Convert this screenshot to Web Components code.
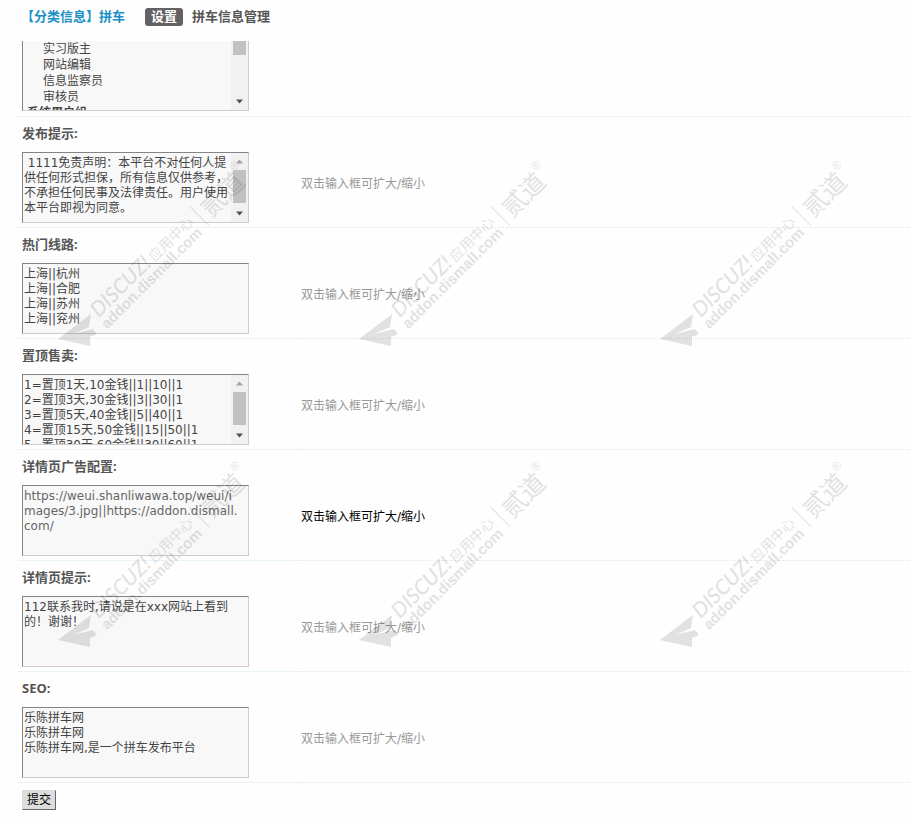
<!DOCTYPE html>
<html lang="zh-CN">
<head>
<meta charset="utf-8">
<title>拼车 - 设置</title>
<style>
  body {
    margin: 0;
    background: #fefefe;
    color: #444;
    font: 12px/16px "DejaVu Sans", "Noto Sans CJK SC", sans-serif;
  }
</style>
</head>
<body>
<admin-page>
  <admin-header slot="header" heading="【分类信息】拼车">
    <a href="#settings" aria-current="page">设置</a>
    <a href="#manage">拼车信息管理</a>
  </admin-header>

  <group-picker></group-picker>

  <setting-row label="发布提示:" scroll>&nbsp;1111免责声明：本平台不对任何人提供任何形式担保，所有信息仅供参考，不承担任何民事及法律责任。用户使用本平台即视为同意。</setting-row>
  <setting-row label="热门线路:">上海||杭州
上海||合肥
上海||苏州
上海||兖州</setting-row>
  <setting-row label="置顶售卖:" scroll>1=置顶1天,10金钱||1||10||1
2=置顶3天,30金钱||3||30||1
3=置顶5天,40金钱||5||40||1
4=置顶15天,50金钱||15||50||1
5=置顶30天,60金钱||30||60||1</setting-row>
  <setting-row label="详情页广告配置:" active>https://weui.shanliwawa.top/weui/images/3.jpg||https://addon.dismall.com/</setting-row>
  <setting-row label="详情页提示:">112联系我时,请说是在xxx网站上看到的！谢谢！</setting-row>
  <setting-row label="SEO:">乐陈拼车网
乐陈拼车网
乐陈拼车网,是一个拼车发布平台</setting-row>

  <submit-bar slot="footer">提交</submit-bar>

  <water-mark slot="marks"></water-mark>
  <water-mark slot="marks"></water-mark>
  <water-mark slot="marks"></water-mark>
  <water-mark slot="marks"></water-mark>
  <water-mark slot="marks"></water-mark>
  <water-mark slot="marks"></water-mark>
</admin-page>

<script>
class AdminPage extends HTMLElement {
  constructor() {
    super();
    this.attachShadow({mode: 'open'});
    this.shadowRoot.innerHTML = `
      <style>
        :host {
          display: block;
          position: relative;
          overflow: hidden;
        }

        main {
          margin-left: 18px;
        }

        /* marks float over the form */
        .marks {
          position: absolute;
          top: 160px;
          left: 58px;
          display: grid;
          grid-template-columns: repeat(3, 301px);
          grid-auto-rows: 301px;
          pointer-events: none;
        }
      </style>
      <slot name="header"></slot>
      <main>
        <slot></slot>
        <slot name="footer"></slot>
      </main>
      <div class="marks" aria-hidden="true"><slot name="marks"></slot></div>
    `;
  }
}

class AdminHeader extends HTMLElement {
  constructor() {
    super();
    this.attachShadow({mode: 'open'});
  }

  connectedCallback() {
    this.shadowRoot.innerHTML = `
      <style>
        :host {
          display: block;
          padding: 8px 21px 15px;
          font-size: 13px;
          font-weight: bold;
          line-height: 18px;
        }

        header, nav {
          display: flex;
          align-items: center;
        }

        header {
          gap: 20px;
        }

        nav {
          gap: 9px;
        }

        h1 {
          margin: 0;
          color: #1b8fc6;
          font-size: inherit;
        }

        ::slotted(a) {
          color: #555;
          text-decoration: none;
        }

        ::slotted(a[aria-current]) {
          padding: 0 6px;
          border-radius: 3px;
          background: #636163;
          color: #fff;
        }
      </style>
      <header>
        <h1>${this.getAttribute('heading')}</h1>
        <nav><slot></slot></nav>
      </header>
    `;
  }
}

class ScrollRail extends HTMLElement {
  constructor() {
    super();
    this.attachShadow({mode: 'open'});
    this.shadowRoot.innerHTML = `
      <style>
        :host {
          display: flex;
          flex-direction: column;
          align-items: center;
          flex: none;
          width: 17px;
          background: #f1f1f1;
        }

        svg {
          flex: none;
          width: 17px;
          height: 17px;
          fill: #505050;
        }

        .up {
          fill: #a3a3a3;
        }

        .thumb {
          width: 13px;
          height: 33px;
          background: #c1c1c1;
        }

        .down {
          margin-top: auto;
        }

        :host([scrolled]) .up {
          display: none;
        }

        :host([scrolled]) .thumb {
          height: 14px;
        }
      </style>
      <svg class="up" viewBox="0 0 17 17"><path d="M5 10.5h7L8.500 6.500z"/></svg>
      <div class="thumb"></div>
      <svg class="down" viewBox="0 0 17 17"><path d="M5 6.500h7L8.500 10.500z"/></svg>
    `;
  }
}

const fieldStyles = `
  :host {
    display: grid;
    grid-template-columns: 279px 1fr;
  }

  .cell, .hint {
    border-bottom: 1px solid #e9f3fa;
  }

  .hint {
    display: flex;
    align-items: center;
    padding-left: 4px;
    border-bottom: 1px dotted #dce8ee;
    color: #999;
  }

  .frame {
    display: flex;
    box-sizing: border-box;
    width: 227px;
    border: 1px solid;
    border-color: #848484 #ccc #ccc #848484;
    background: #f8f8f8;
  }

  textarea, select {
    flex: 1;
    min-width: 0;
    margin: 0;
    border: 0;
    outline: 0;
    background: none;
    color: inherit;
    font: inherit;
    overflow: hidden;
  }
`;

class GroupPicker extends HTMLElement {
  constructor() {
    super();
    this.attachShadow({mode: 'open'});
    this.shadowRoot.innerHTML = `
      <style>
        ${fieldStyles}

        .cell {
          padding: 0 4px 5px;
        }

        .frame {
          height: 70px;
          border-top: 0;
        }

        select {
          padding: 0;
          border-radius: 0;
        }

        option {
          box-sizing: border-box;
          height: 16px;
          min-height: 0;
          padding: 0 0 0 20px;
          line-height: 16px;
          overflow: hidden;
        }

        optgroup {
          padding-left: 2px;
          font-weight: bold;
        }
      </style>
      <div class="cell">
        <div class="frame">
          <select multiple aria-label="用户组">
            <option>实习版主</option>
            <option>网站编辑</option>
            <option>信息监察员</option>
            <option>审核员</option>
            <optgroup label="系统用户组"></optgroup>
          </select>
          <scroll-rail scrolled></scroll-rail>
        </div>
      </div>
      <div class="hint"></div>
    `;
  }

  connectedCallback() {
    this.shadowRoot.querySelector('select').scrollTop = 2;
  }
}

class SettingRow extends HTMLElement {
  constructor() {
    super();
    this.attachShadow({mode: 'open'});
  }

  connectedCallback() {
    const rail = this.hasAttribute('scroll') ? '<scroll-rail></scroll-rail>' : '';

    this.shadowRoot.innerHTML = `
      <style>
        ${fieldStyles}

        label {
          grid-column: 1 / -1;
          padding: 8px 4px 0;
          color: #555;
          font-family: "Noto Sans", "Noto Sans CJK SC", sans-serif;
          font-size: 13px;
          font-weight: bold;
        }

        .cell {
          padding: 11px 4px 4px;
        }

        .frame {
          height: 71px;
        }

        textarea {
          padding: 3px 1px 0;
          line-height: 15px;
          resize: none;
          word-break: normal;
          overflow-wrap: anywhere;
        }

        :host([active]) .hint {
          color: #000;
        }

        :host([active]) textarea {
          padding-right: 5px;
          color: #666;
          word-break: break-all;
        }
      </style>
      <label for="field">${this.getAttribute('label')}</label>
      <div class="cell">
        <div class="frame">
          <textarea id="field" spellcheck="false"></textarea>
          ${rail}
        </div>
      </div>
      <div class="hint">双击输入框可扩大/缩小</div>
    `;
    this.shadowRoot.querySelector('textarea').value = this.textContent;
  }
}

class SubmitBar extends HTMLElement {
  constructor() {
    super();
    this.attachShadow({mode: 'open'});
    this.shadowRoot.innerHTML = `
      <style>
        :host {
          display: block;
          padding: 7px 4px 10px;
        }

        button {
          display: block;
          padding: 0 4px;
          border: 1px solid;
          border-color: #ddd #666 #666 #ddd;
          background: #ddd;
          color: #000;
          font: inherit;
          line-height: 18px;
        }
      </style>
      <button type="submit"><slot></slot></button>
    `;
  }
}

class WaterMark extends HTMLElement {
  constructor() {
    super();
    this.attachShadow({mode: 'open'});
    this.shadowRoot.innerHTML = `
      <style>
        :host {
          display: block;
        }

        svg {
          display: block;
          overflow: visible;
          fill: #000;
          opacity: .11;
          font-family: "Liberation Sans", "Noto Sans CJK SC", sans-serif;
        }

        .brand {
          font: italic 500 21px Lato, sans-serif;
        }

        .site {
          font-size: 15px;
          font-weight: bold;
        }
      </style>
      <svg width="192" height="188" viewBox="0 0 192 188">
        <path d="M0 179L33 154L31 167L15 174L35 169L39 174L32 177V186z"/>
        <g transform="translate(40 159) rotate(-45)">
          <text class="brand" x="1" y="0">DISCUZ!</text>
          <text x="80" y="0" font-size="14">应用中心</text>
          <text class="site" x="-1" y="14">addon.dismall.com</text>
          <rect x="144" y="-15" width="1" height="28"/>
          <text x="151" y="9" font-size="25">贰道</text>
          <text x="201" y="-8" font-size="12">®</text>
        </g>
      </svg>
    `;
  }
}

customElements.define('scroll-rail', ScrollRail);
customElements.define('admin-page', AdminPage);
customElements.define('admin-header', AdminHeader);
customElements.define('group-picker', GroupPicker);
customElements.define('setting-row', SettingRow);
customElements.define('submit-bar', SubmitBar);
customElements.define('water-mark', WaterMark);
</script>
</body>
</html>
